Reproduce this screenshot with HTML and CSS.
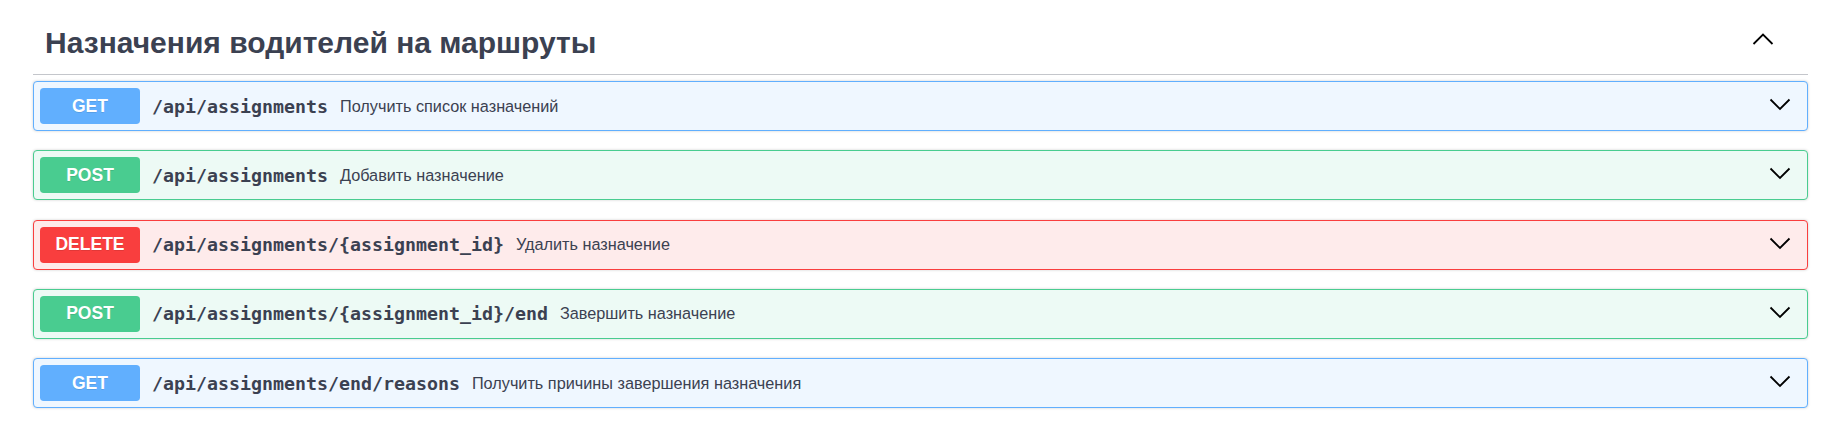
FILE: index.html
```html
<!DOCTYPE html>
<html lang="ru">
<head>
<meta charset="utf-8">
<title>Назначения водителей на маршруты</title>
<link rel="stylesheet" href="styles.css">
</head>
<body>
<div class="wrap">
  <section class="tag-section">
    <h3 class="tag">
      <span class="tag-name">Назначения водителей на маршруты</span>
      <span class="expand">
        <svg class="chev" width="24" height="24" viewBox="0 0 24 24"><polyline points="2.5,17 12,7.5 21.5,17" /></svg>
      </span>
    </h3>
    <div class="ops">
      <div class="opblock get">
        <div class="summary">
          <span class="method">GET</span>
          <span class="path">/api/assignments</span>
          <span class="desc">Получить список назначений</span>
          <span class="arrow"><svg class="chev" width="24" height="24" viewBox="0 0 24 24"><polyline points="2.5,7.5 12,17 21.5,7.5" /></svg></span>
        </div>
      </div>
      <div class="opblock post">
        <div class="summary">
          <span class="method">POST</span>
          <span class="path">/api/assignments</span>
          <span class="desc">Добавить назначение</span>
          <span class="arrow"><svg class="chev" width="24" height="24" viewBox="0 0 24 24"><polyline points="2.5,7.5 12,17 21.5,7.5" /></svg></span>
        </div>
      </div>
      <div class="opblock delete">
        <div class="summary">
          <span class="method">DELETE</span>
          <span class="path">/api/assignments/{assignment_id}</span>
          <span class="desc">Удалить назначение</span>
          <span class="arrow"><svg class="chev" width="24" height="24" viewBox="0 0 24 24"><polyline points="2.5,7.5 12,17 21.5,7.5" /></svg></span>
        </div>
      </div>
      <div class="opblock post">
        <div class="summary">
          <span class="method">POST</span>
          <span class="path">/api/assignments/{assignment_id}/end</span>
          <span class="desc">Завершить назначение</span>
          <span class="arrow"><svg class="chev" width="24" height="24" viewBox="0 0 24 24"><polyline points="2.5,7.5 12,17 21.5,7.5" /></svg></span>
        </div>
      </div>
      <div class="opblock get">
        <div class="summary">
          <span class="method">GET</span>
          <span class="path">/api/assignments/end/reasons</span>
          <span class="desc">Получить причины завершения назначения</span>
          <span class="arrow"><svg class="chev" width="24" height="24" viewBox="0 0 24 24"><polyline points="2.5,7.5 12,17 21.5,7.5" /></svg></span>
        </div>
      </div>
    </div>
  </section>
</div>
</body>
</html>
```
FILE: styles.css
```css
html, body {
  margin: 0;
  padding: 0;
  background: #ffffff;
}

body {
  font-family: "Liberation Sans", Arial, sans-serif;
  color: #3b4151;
}

.wrap {
  padding: 12px 34px 0 33px;
}

.tag {
  display: flex;
  align-items: center;
  margin: 0 0 6px 0;
  padding: 12px 24px 12px 12px;
  border-bottom: 1px solid #c4c6cb;
  font-family: "Liberation Sans", Arial, sans-serif;
  font-size: 30px;
  font-weight: bold;
  line-height: 38px;
  color: #3b4151;
}

.tag-name {
  flex: 1 1 auto;
}

.expand {
  display: flex;
  margin-right: 9px;
  margin-bottom: 8px;
}

.chev {
  display: block;
  fill: none;
  stroke: #000000;
  stroke-width: 1.8;
  stroke-linecap: butt;
  stroke-linejoin: miter;
}

.ops {
  display: flex;
  flex-direction: column;
}

.opblock {
  border: 1px solid #000;
  border-radius: 4px;
  box-shadow: 0 0 3px rgba(0, 0, 0, 0.19);
  margin-bottom: 19.25px;
}

.opblock.get {
  background: #eff7ff;
  border-color: #61affe;
}

.opblock.post {
  background: #edfaf5;
  border-color: #49cc90;
}

.opblock.delete {
  background: #feebeb;
  border-color: #f93e3e;
}

.summary {
  display: flex;
  align-items: center;
  padding: 6px;
}

.method {
  flex: 0 0 auto;
  width: 100px;
  height: 36px;
  display: flex;
  align-items: center;
  justify-content: center;
  border-radius: 3.75px;
  color: #ffffff;
  font-family: "Liberation Sans", Arial, sans-serif;
  font-weight: bold;
  font-size: 17.5px;
  text-shadow: 0 1px 0 rgba(0, 0, 0, 0.1);
}

.get .method { background: #61affe; }
.post .method { background: #49cc90; }
.delete .method { background: #f93e3e; }

.path {
  flex: 0 0 auto;
  padding: 0 12px;
  font-family: "DejaVu Sans Mono", "Liberation Mono", monospace;
  font-weight: bold;
  font-size: 18.27px;
  color: #3b4151;
}

.desc {
  flex: 1 1 auto;
  font-family: "Liberation Sans", Arial, sans-serif;
  font-size: 16.25px;
  color: #3b4151;
}

.arrow {
  display: flex;
  margin-right: 9px;
  margin-bottom: 4px;
}
```
